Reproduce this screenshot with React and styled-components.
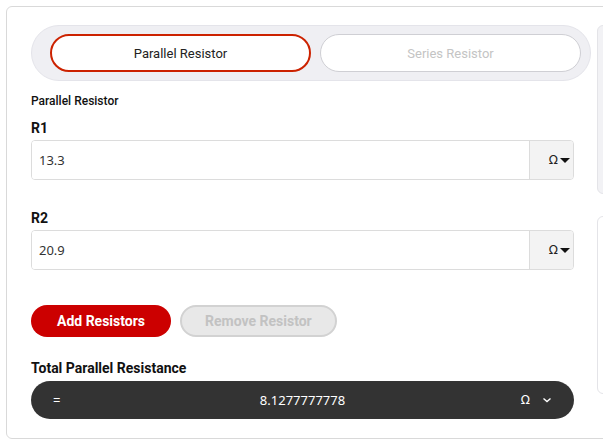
import React, { useState } from 'react'
import styled, { createGlobalStyle } from 'styled-components'

const GlobalStyle = createGlobalStyle`
  body {
    margin: 0;
    background: #fff;
    font-family: Roboto, 'Liberation Sans', sans-serif;
    overflow: hidden;
  }
`

const Page = styled.div`
  padding: 6px 0 0 6px;
  width: 700px;
`

const Card = styled.div`
  display: grid;
  grid-template-columns: 560px 1fr;
  column-gap: 6px;
  height: 433px;
  box-sizing: border-box;
  padding: 18px 0 0 24px;
  border: 1px solid #d9d9d9;
  border-radius: 6px;
  background: #fff;
`

const Main = styled.div`
  display: flex;
  flex-direction: column;
`

const Side = styled.div`
  display: flex;
  flex-direction: column;
  gap: 22px;
`

const SideBox = styled.div`
  height: ${p => p.h}px;
  border: 1px solid #e4e4e8;
  border-radius: 6px;
  background: ${p => (p.grey ? '#f2f2f5' : '#fff')};
`

const TabBar = styled.div`
  display: grid;
  grid-template-columns: 1fr 1fr;
  gap: 9px;
  padding: 8px 9px 8px 18px;
  background: #efeff3;
  border: 1px solid #e4e4ea;
  border-radius: 28px;
`

const Tab = styled.button`
  height: 38px;
  border-radius: 20px;
  background: #fff;
  border: ${p => (p.active ? '2px solid #cc2200' : '1px solid #cfcfd4')};
  color: ${p => (p.active ? '#222' : '#c4c4c4')};
  font-family: Roboto, sans-serif;
  font-size: 13px;
  cursor: pointer;
`

const Heading = styled.div`
  margin: 13px 0 0;
  font-size: 12px;
  font-weight: 500;
  color: #111;
`

const Label = styled.div`
  margin-top: ${p => p.top}px;
  font-size: 14px;
  font-weight: 700;
  color: #111;
`

const InputGroup = styled.div`
  display: flex;
  width: 543px;
  height: 40px;
  margin-top: 4px;
  border: 1px solid #dcdcdc;
  border-radius: 4px;
  box-sizing: border-box;
  overflow: hidden;
`

const Input = styled.input`
  flex: 1;
  border: none;
  outline: none;
  padding: 0 7px;
  font-family: 'Noto Sans', 'Open Sans', sans-serif;
  font-size: 13px;
  color: #333;
`

const UnitSelect = styled.div`
  width: 44px;
  display: flex;
  align-items: center;
  justify-content: flex-end;
  gap: 2px;
  padding-right: 3px;
  box-sizing: border-box;
  background: #f3f3f3;
  border-left: 1px solid #dcdcdc;
  font-family: 'DejaVu Sans', sans-serif;
  font-size: 12px;
  color: #222;
`

const Caret = styled.span`
  width: 0;
  height: 0;
  border-left: 5px solid transparent;
  border-right: 5px solid transparent;
  border-top: 5px solid #111;
`

const Buttons = styled.div`
  display: flex;
  gap: 9px;
  margin-top: 35px;
`

const Button = styled.button`
  height: 32px;
  padding: 0 ${p => (p.primary ? 26 : 23)}px;
  border-radius: 16px;
  font-family: Roboto, sans-serif;
  font-size: 14px;
  font-weight: 700;
  border: ${p => (p.primary ? 'none' : '2px solid #d2d2d2')};
  background: ${p => (p.primary ? '#cc0000' : '#e8e8e8')};
  color: ${p => (p.primary ? '#fff' : '#c2c2c2')};
  cursor: pointer;
`

const ResultBar = styled.div`
  display: grid;
  grid-template-columns: 1fr auto 1fr;
  align-items: center;
  width: 543px;
  height: 38px;
  margin-top: 5px;
  padding: 0 22px 0 22px;
  box-sizing: border-box;
  border-radius: 19px;
  background: #333;
  color: #fff;
  font-family: 'Noto Sans', 'Open Sans', sans-serif;
  font-size: 13px;
`

const ResultUnit = styled.div`
  display: flex;
  justify-content: flex-end;
  align-items: center;
  gap: 12px;
  font-family: 'DejaVu Sans', sans-serif;
  font-size: 12px;
`

const Chevron = () => (
  <svg width="10" height="10" viewBox="0 0 10 10">
    <path d="M1.5 3.5 L5 6.5 L8.5 3.5" stroke="#fff" strokeWidth="1.4" fill="none" />
  </svg>
)

const ResistorInput = ({ label, value, top }) => (
  <>
    <Label top={top}>{label}</Label>
    <InputGroup>
      <Input defaultValue={value} />
      <UnitSelect>
        Ω<Caret />
      </UnitSelect>
    </InputGroup>
  </>
)

export default function App() {
  const [mode, setMode] = useState('parallel')
  return (
    <Page>
      <GlobalStyle />
      <Card>
        <Main>
          <TabBar>
            <Tab active={mode === 'parallel'} onClick={() => setMode('parallel')}>
              Parallel Resistor
            </Tab>
            <Tab active={mode === 'series'} onClick={() => setMode('series')}>
              Series Resistor
            </Tab>
          </TabBar>
          <Heading>Parallel Resistor</Heading>
          <ResistorInput label="R1" value="13.3" top={12} />
          <ResistorInput label="R2" value="20.9" top={30} />
          <Buttons>
            <Button primary>Add Resistors</Button>
            <Button>Remove Resistor</Button>
          </Buttons>
          <Label top={23}>Total Parallel Resistance</Label>
          <ResultBar>
            <span>=</span>
            <span>8.1277777778</span>
            <ResultUnit>
              Ω<Chevron />
            </ResultUnit>
          </ResultBar>
        </Main>
        <Side>
          <SideBox grey h={167} />
          <SideBox h={176} />
        </Side>
      </Card>
    </Page>
  )
}
